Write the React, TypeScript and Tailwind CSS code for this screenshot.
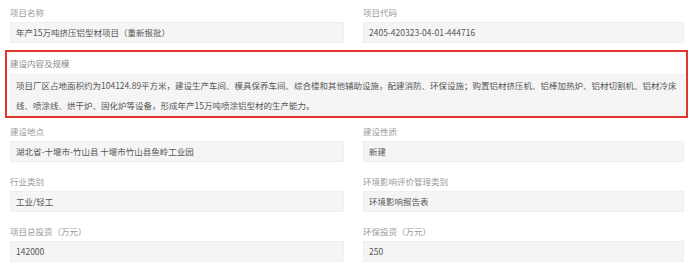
const FONT = "font-['Noto_Sans_CJK_SC','Noto_Sans',sans-serif]";

type FieldProps = {
  label: string;
  value: string;
};

function Field({ label, value }: FieldProps) {
  return (
    <div className="flex flex-col">
      <div className="pt-[5px] text-[8.5px] leading-[14px] text-[#9a9a9a]">{label}</div>
      <div className="mt-[3px] flex h-[21px] items-center border border-[#efefef] bg-[#f5f5f5] px-[5px] text-[8.5px] text-[#555]">
        {value}
      </div>
    </div>
  );
}

function Row({ left, right }: { left: FieldProps; right: FieldProps }) {
  return (
    <div className="grid h-[50px] grid-cols-[334px_321px] gap-x-[19px] px-[5px]">
      <Field {...left} />
      <Field {...right} />
    </div>
  );
}

export default function App() {
  return (
    <div className={`h-[268px] w-[691px] overflow-hidden bg-white pl-[5px] ${FONT}`}>
      <Row
        left={{ label: "项目名称", value: "年产15万吨挤压铝型材项目（重新报批）" }}
        right={{ label: "项目代码", value: "2405-420323-04-01-444716" }}
      />

      <div className="w-[683px] border-2 border-[#e0362c] pl-[3px] pr-[1px]">
        <div className="pt-[4px] text-[8.5px] leading-[14px] text-[#8a8a8a]">建设内容及规模</div>
        <div className="mt-[4px] border border-[#efefef] bg-[#f5f5f5] px-[5px] text-[8.5px] leading-[20px] text-[#555]">
          项目厂区占地面积约为104124.89平方米，建设生产车间、模具保养车间、综合楼和其他辅助设施，配建消防、环保设施；购置铝材挤压机、铝棒加热炉、铝材切割机、铝材冷床线、喷涂线、烘干炉、固化炉等设备，形成年产15万吨喷涂铝型材的生产能力。
        </div>
      </div>

      <div className="mt-[1px]">
        <Row
          left={{ label: "建设地点", value: "湖北省-十堰市-竹山县 十堰市竹山县鱼岭工业园" }}
          right={{ label: "建设性质", value: "新建" }}
        />
        <Row
          left={{ label: "行业类别", value: "工业/轻工" }}
          right={{ label: "环境影响评价管理类别", value: "环境影响报告表" }}
        />
        <Row
          left={{ label: "项目总投资（万元）", value: "142000" }}
          right={{ label: "环保投资（万元）", value: "250" }}
        />
      </div>
    </div>
  );
}
